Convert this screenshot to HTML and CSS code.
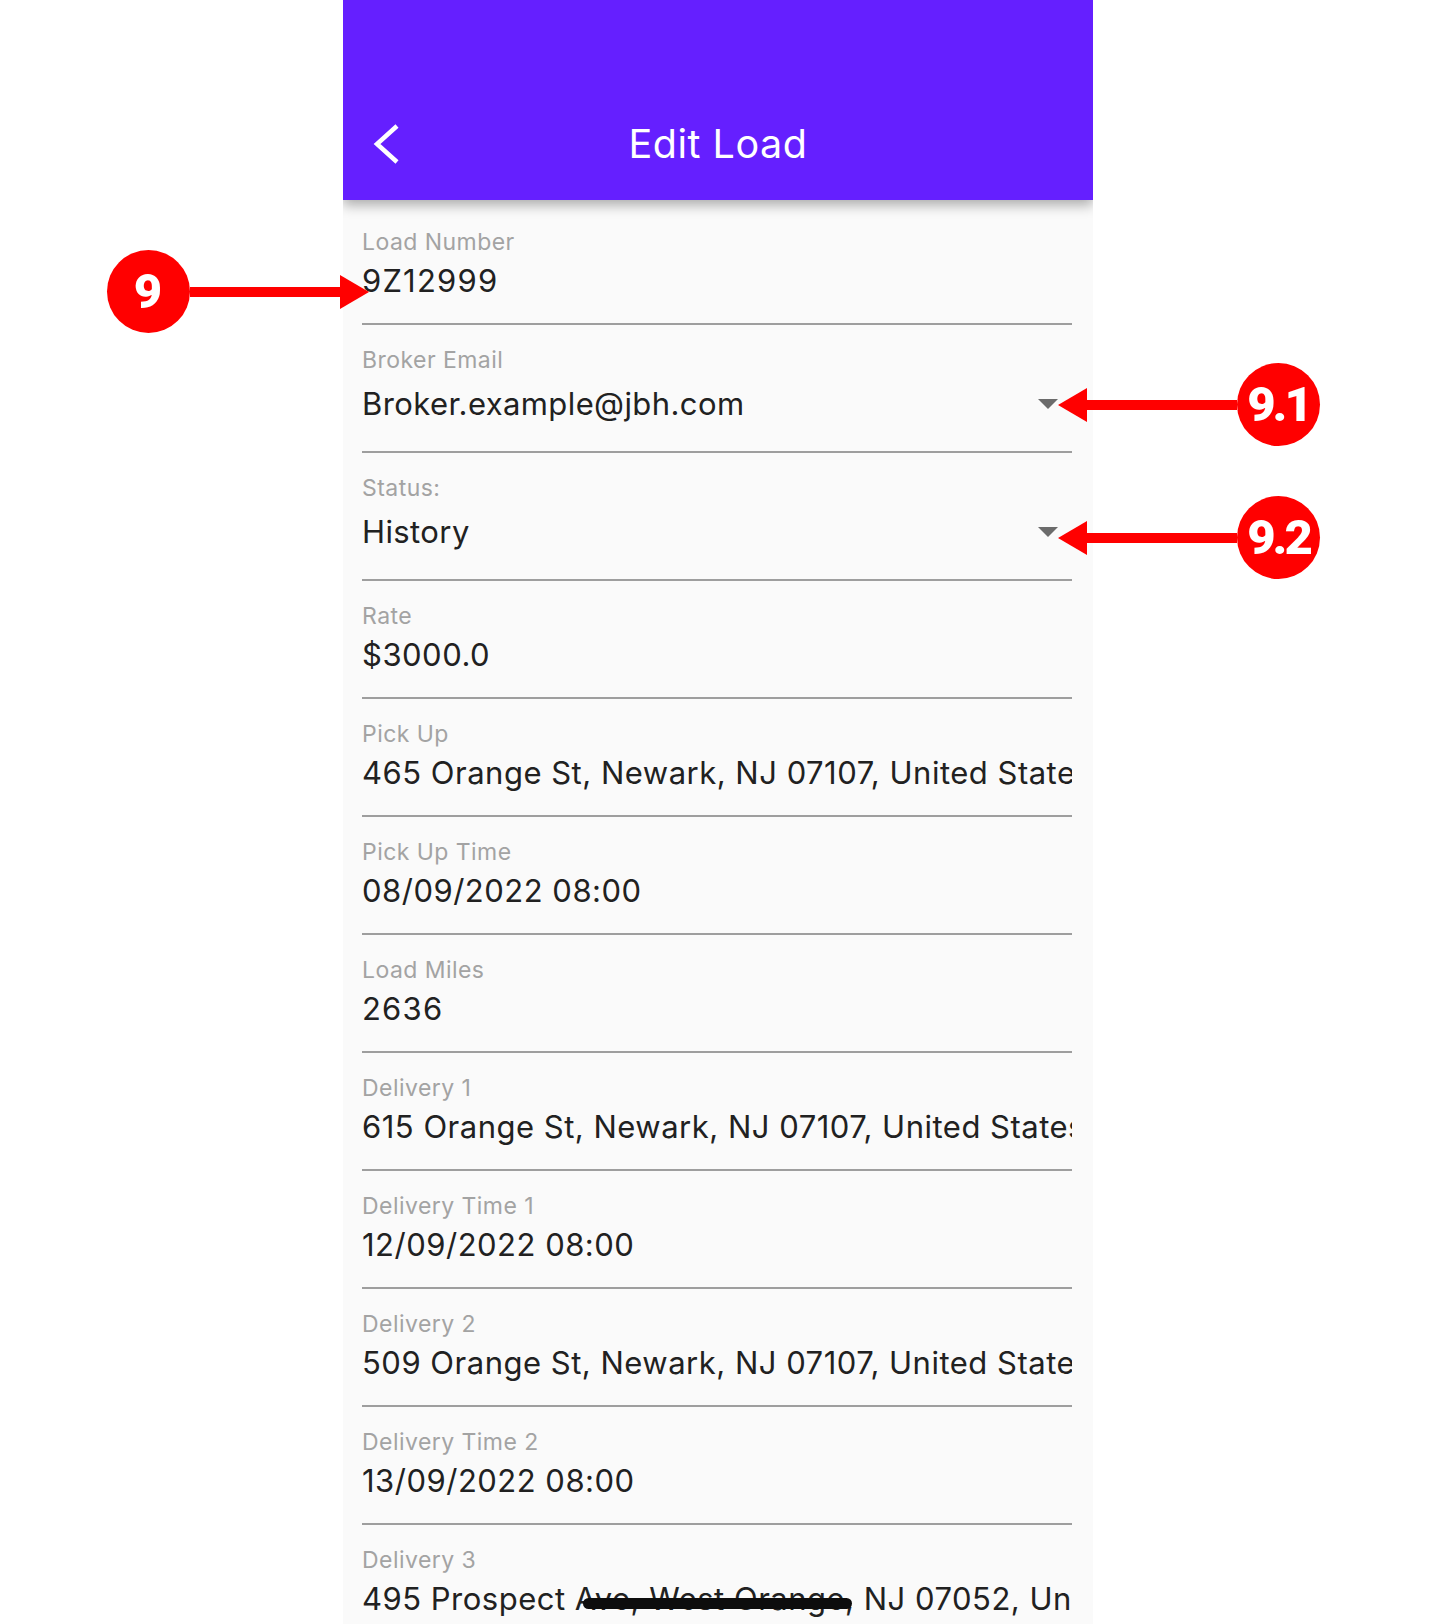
FILE: index.html
```html
<!DOCTYPE html>
<html lang="en">
<head>
<meta charset="utf-8">
<title>Edit Load</title>
<link rel="stylesheet" href="styles.css">
</head>
<body>
<main class="phone">
  <header class="appbar">
    <svg class="back" viewBox="0 0 26 40" width="26" height="40"><path d="M24 2 L4 20 L24 38"/></svg>
    <h1 class="title">Edit Load</h1>
  </header>
  <section class="form">
    <div class="field"><span class="label">Load Number</span><div class="value wide">9Z12999</div></div>
    <div class="field select"><span class="label">Broker Email</span><div class="value">Broker.example@jbh.com<i class="caret"></i></div></div>
    <div class="field select"><span class="label">Status:</span><div class="value">History<i class="caret"></i></div></div>
    <div class="field"><span class="label">Rate</span><div class="value">$3000.0</div></div>
    <div class="field"><span class="label">Pick Up</span><div class="value">465 Orange St, Newark, NJ 07107, United States</div></div>
    <div class="field"><span class="label">Pick Up Time</span><div class="value">08/09/2022 08:00</div></div>
    <div class="field"><span class="label">Load Miles</span><div class="value wide">2636</div></div>
    <div class="field"><span class="label">Delivery 1</span><div class="value">615 Orange St, Newark, NJ 07107, United States</div></div>
    <div class="field"><span class="label">Delivery Time 1</span><div class="value">12/09/2022 08:00</div></div>
    <div class="field"><span class="label">Delivery 2</span><div class="value">509 Orange St, Newark, NJ 07107, United States</div></div>
    <div class="field"><span class="label">Delivery Time 2</span><div class="value">13/09/2022 08:00</div></div>
    <div class="field"><span class="label">Delivery 3</span><div class="value">495 Prospect Ave, West Orange, NJ 07052, United States</div></div>
  </section>
  <div class="scribble"></div>
</main>
<div class="callout c9"><span class="badge">9</span><span class="bar"></span><span class="head"></span></div>
<div class="callout c91 rev"><span class="badge">9.1</span><span class="bar"></span><span class="head"></span></div>
<div class="callout c92 rev"><span class="badge">9.2</span><span class="bar"></span><span class="head"></span></div>
</body>
</html>
```
FILE: styles.css
```css
html, body { margin: 0; padding: 0; height: 1624px; overflow: hidden; background: #fff; }
body { display: flex; justify-content: center; font-family: Inter, Roboto, "Liberation Sans", sans-serif; position: relative; }
.phone { width: 750px; height: 1624px; background: #fafafa; position: relative; overflow: hidden; margin-left: 1px; }
.appbar { height: 200px; background: #651fff; box-shadow: 0 5px 12px rgba(0,0,0,.32); position: relative; display: flex; align-items: flex-end; justify-content: center; }
.back { position: absolute; left: 30px; top: 124px; fill: none; stroke: #fff; stroke-width: 4.5; }
.title { margin: 0 0 28px; font-size: 39.5px; font-weight: 400; line-height: 56px; color: #fff; letter-spacing: .5px; }
.form { padding: 0 21px 0 19px; display: flex; flex-direction: column; }
.field { height: 118px; box-sizing: border-box; border-bottom: 2px solid #9e9e9e; padding-top: 21px; }
.field.select { height: 128px; }
.field:first-child { height: 125px; padding-top: 28px; }
.label { display: block; font-size: 23px; line-height: 28px; color: #a3a3a3; letter-spacing: .45px; white-space: nowrap; }
.value { position: relative; margin-top: 6px; font-size: 31px; line-height: 38px; color: #212121; letter-spacing: .5px; white-space: nowrap; overflow: hidden; }
.value.wide { letter-spacing: 1.2px; }
.select .value { margin-top: 11px; letter-spacing: .4px; overflow: visible; }
.caret { position: absolute; right: 14px; top: 14px; width: 0; height: 0; border-left: 10px solid transparent; border-right: 10px solid transparent; border-top: 10px solid #6b6b6b; }
.scribble { position: absolute; left: 240px; top: 1598px; width: 269px; height: 11px; border-radius: 6px; background: #0d0d0d; }
.callout { position: absolute; display: flex; align-items: center; }
.callout.rev { flex-direction: row-reverse; }
.c9 { left: 107px; top: 250px; }
.c91 { left: 1058px; top: 363px; }
.c92 { left: 1058px; top: 496px; }
.badge { width: 83px; height: 83px; border-radius: 50%; background: #ff0000; color: #fff; font-family: Roboto, "Liberation Sans", Arial, sans-serif; font-weight: 900; font-size: 49px; letter-spacing: -3px; display: flex; align-items: center; justify-content: center; flex: none; }
.c9 .badge { padding-right: 4px; box-sizing: border-box; }
.bar { width: 150px; height: 10px; background: #ff0000; }
.head { width: 0; height: 0; border-top: 17px solid transparent; border-bottom: 17px solid transparent; border-left: 29px solid #ff0000; }
.rev .head { border-left: 0; border-right: 29px solid #ff0000; }
```
